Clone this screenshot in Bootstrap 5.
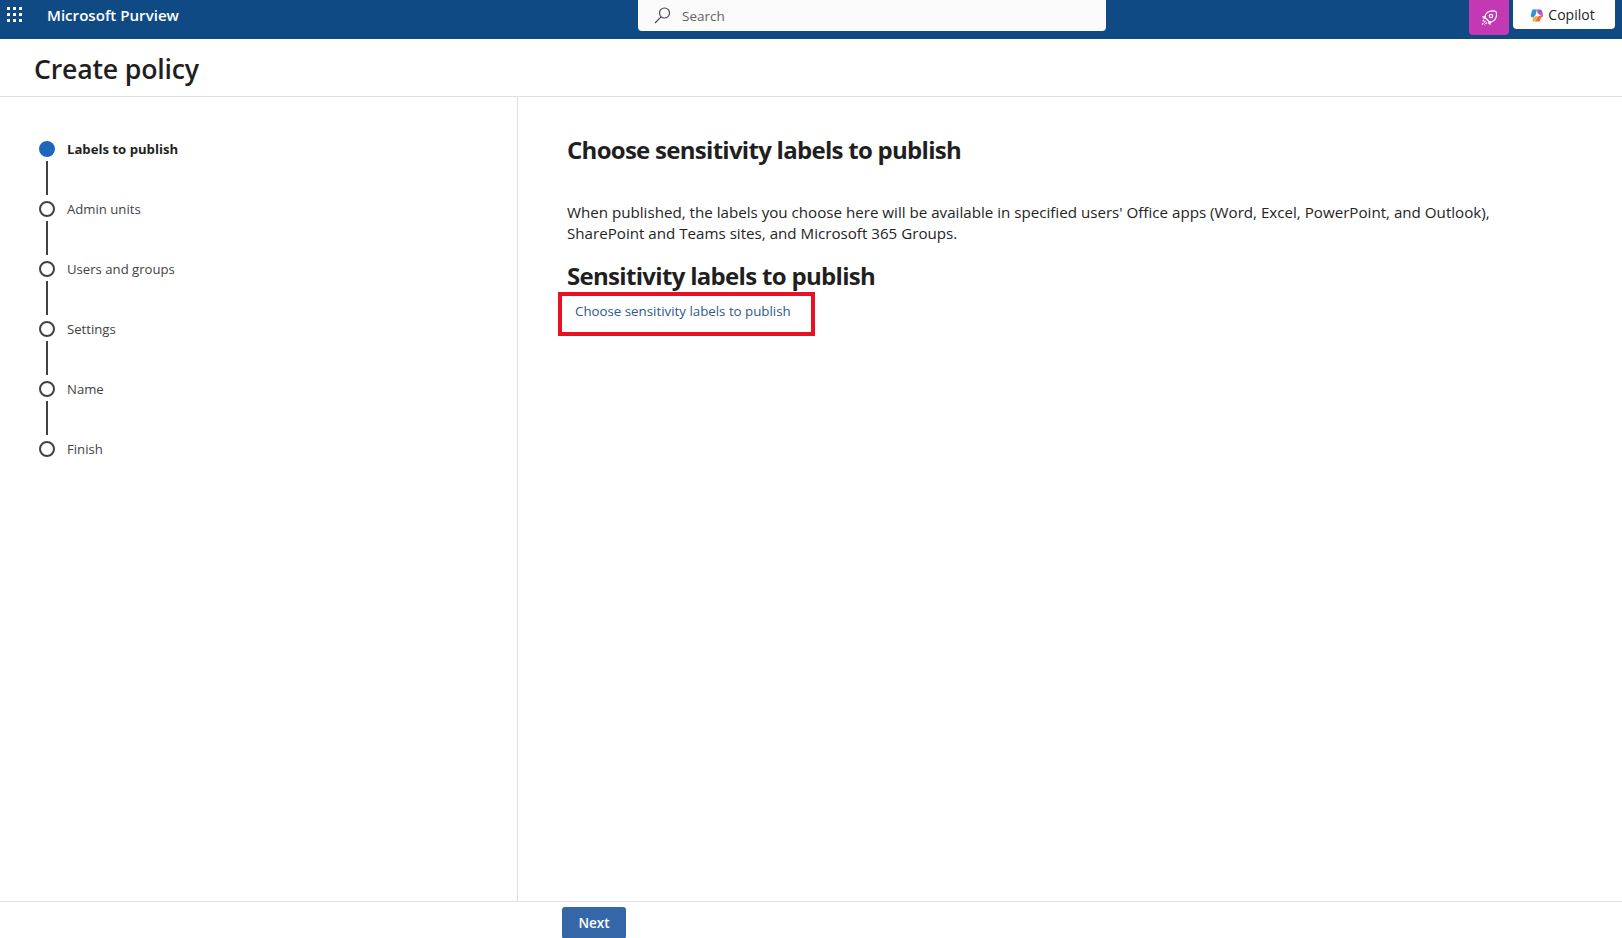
<!DOCTYPE html>
<html lang="en">
<head>
  <meta charset="UTF-8" />
  <meta name="viewport" content="width=device-width, initial-scale=1.0"/>
  <title>Create policy</title>
  <link href="https://cdn.jsdelivr.net/npm/bootstrap@5.3.2/dist/css/bootstrap.min.css" rel="stylesheet"/>
  <style>
    html, body { height: 100%; overflow: hidden; }
    body { font-family: "Open Sans", "Noto Sans", sans-serif; color: #1f1f1f; background: #fff; }
    .top-bar { height: 39px; background: #0f4a85; color: #fff; }
    .waffle { width: 47px; padding-left: 7px; height: 30px; }
    .brand-name { width: 591px; height: 30px; font-size: 15.1px; font-weight: 600; }
    .search-box { width: 468px; height: 31px; background: #fafafa; border-radius: 0 0 4px 4px; padding-left: 16px; color: #616161; font-size: 13.5px; }
    .search-box span { margin: 2px 0 0 11px; }
    .top-right { margin-left: 363px; }
    .rocket-tile { width: 40px; height: 35px; background: #c239b3; border-radius: 0 0 4px 4px; }
    .copilot-btn { width: 102px; height: 29px; margin-left: 4px; padding-right: 3px; background: #fff; border-radius: 0 0 4px 4px; color: #242424; font-size: 14px; font-weight: 500; gap: 4px; }
    .copilot-btn span { margin-bottom: 1px; }
    .title-bar { height: 58px; border-bottom: 1px solid #e0e0e0; padding: 3px 0 0 34px; }
    .title-bar h1 { font-size: 26.7px; font-weight: 600; margin: 0; letter-spacing: -.2px; color: #1f1f1f; }
    .wizard-body { height: 804px; }
    .step-rail { width: 518px; border-right: 1px solid #e0e0e0; padding: 44px 0 0 39px; }
    .step-item { height: 60px; font-size: 13.15px; color: #424242; }
    .step-dot { width: 16px; height: 16px; border-radius: 50%; border: 2px solid #424242; background: #fff; flex: none; }
    .step-item.is-current .step-dot { background: #1f66bd; border-color: #1f66bd; }
    .step-item.is-current { font-weight: 700; color: #1f1f1f; }
    .step-line { width: 2px; height: 34px; background: #424242; margin: 4px 0 0 7px; }
    .step-head { height: 16px; gap: 12px; }
    .step-head span { margin-top: 2px; }
    .pane { padding: 37px 0 0 49px; }
    .pane h2 { font-size: 24px; font-weight: 700; line-height: 32px; margin: 0 0 36px; letter-spacing: -.72px; color: #1f1f1f; }
    .pane p { font-size: 15.15px; line-height: 21px; width: 930px; margin: 0 0 16px; color: #242424; }
    .pane h3 { font-size: 24px; font-weight: 700; line-height: 32px; margin: 0; letter-spacing: -.69px; color: #1f1f1f; }
    .pick-link { width: 257px; height: 44px; margin: 0 0 0 -9px; border: 4px solid #e81123; padding: 6px 0 0 13px; font-size: 13.3px; color: #2b5a8c; text-decoration: none; display: block; }
    .foot-bar { height: 37px; border-top: 1px solid #e0e0e0; padding: 5px 0 0 562px; }
    .next-btn { width: 64px; height: 32px; padding: 1px 0 0; background: #3566a8; border: 0; border-radius: 3px; color: #fff; font-size: 13.5px; font-weight: 600; }
  </style>
</head>
<body>

  <!-- Top bar -->
  <header class="top-bar d-flex align-items-start">
    <div class="waffle d-flex align-items-center">
      <svg width="16" height="16" viewBox="0 0 16 16" fill="#fff">
        <rect x="0" y="0" width="3" height="3"/><rect x="6" y="0" width="3" height="3"/><rect x="12" y="0" width="3" height="3"/>
        <rect x="0" y="6" width="3" height="3"/><rect x="6" y="6" width="3" height="3"/><rect x="12" y="6" width="3" height="3"/>
        <rect x="0" y="12" width="3" height="3"/><rect x="6" y="12" width="3" height="3"/><rect x="12" y="12" width="3" height="3"/>
      </svg>
    </div>
    <div class="brand-name d-flex align-items-center">Microsoft Purview</div>
    <div class="search-box d-flex align-items-center">
      <svg width="17" height="17" viewBox="0 0 17 17" fill="none" stroke="#424242" stroke-width="1.1">
        <circle cx="10.5" cy="6" r="5"/><path d="M7 9.8 1 16"/>
      </svg>
      <span>Search</span>
    </div>
    <div class="top-right d-flex align-items-start">
      <div class="rocket-tile d-flex align-items-center justify-content-center">
        <svg width="16" height="16" viewBox="0 0 16 16" fill="none" stroke="#fff" stroke-width="1.2">
          <path d="M9.5 1.200c2.800-.6 5 .1 5.300 .4s1 2.500.4 5.300c-.4 1.900-1.700 3.400-3.400 4.300L9 12.500 3.500 7l1.300-2.800c.9-1.700 2.800-2.600 4.700-3Z"/>
          <circle cx="10" cy="6" r="1.700"/>
          <path d="M5 6.500 2 7l1.500 1.800M9.500 11l-.5 3-1.800-1.500"/>
          <path d="M4.500 11 1 14.500M6 12.500 3.500 15M3 9.800 1 11.800" stroke-dasharray="2 1"/>
        </svg>
      </div>
      <div class="copilot-btn d-flex align-items-center justify-content-center">
        <svg width="14" height="14" viewBox="0 0 14 14">
          <path d="M3 1.500h4L5.500 7 3 9.500C1 9.500.5 8 1 6.500L2 3c.2-1 .5-1.500 1-1.500Z" fill="#2f8fe0"/>
          <path d="M7 1.500h3c1 0 1.500.5 2 1.500l1 3.500-3 .5L7.500 5Z" fill="#b04fd0"/>
          <path d="M13 6.500c.5 2-.5 3-2 3l-1 3c-.2.6-.8 1-1.500 1H5L8 8.500Z" fill="#f0663c"/>
          <path d="M3 9.500 6 8l2 .5-2.500 5H4c-1 0-1.500-.5-1.500-1.500Z" fill="#f4b23e"/>
        </svg>
        <span>Copilot</span>
      </div>
    </div>
  </header>

  <!-- Title -->
  <div class="title-bar d-flex align-items-center">
    <h1>Create policy</h1>
  </div>

  <div class="wizard-body d-flex">
    <!-- Steps -->
    <nav class="step-rail flex-shrink-0">
      <div class="step-item is-current">
        <div class="step-head d-flex align-items-center"><div class="step-dot"></div><span>Labels to publish</span></div>
        <div class="step-line"></div>
      </div>
      <div class="step-item">
        <div class="step-head d-flex align-items-center"><div class="step-dot"></div><span>Admin units</span></div>
        <div class="step-line"></div>
      </div>
      <div class="step-item">
        <div class="step-head d-flex align-items-center"><div class="step-dot"></div><span>Users and groups</span></div>
        <div class="step-line"></div>
      </div>
      <div class="step-item">
        <div class="step-head d-flex align-items-center"><div class="step-dot"></div><span>Settings</span></div>
        <div class="step-line"></div>
      </div>
      <div class="step-item">
        <div class="step-head d-flex align-items-center"><div class="step-dot"></div><span>Name</span></div>
        <div class="step-line"></div>
      </div>
      <div class="step-item">
        <div class="step-head d-flex align-items-center"><div class="step-dot"></div><span>Finish</span></div>
      </div>
    </nav>

    <!-- Main pane -->
    <main class="pane flex-grow-1">
      <h2>Choose sensitivity labels to publish</h2>
      <p>When published, the labels you choose here will be available in specified users' Office apps (Word, Excel, PowerPoint, and Outlook), SharePoint and Teams sites, and Microsoft 365 Groups.</p>
      <h3>Sensitivity labels to publish</h3>
      <a class="pick-link" href="#">Choose sensitivity labels to publish</a>
    </main>
  </div>

  <!-- Footer -->
  <footer class="foot-bar">
    <button class="btn next-btn" type="button">Next</button>
  </footer>

  <script src="https://cdn.jsdelivr.net/npm/bootstrap@5.3.2/dist/js/bootstrap.bundle.min.js"></script>
</body>
</html>
